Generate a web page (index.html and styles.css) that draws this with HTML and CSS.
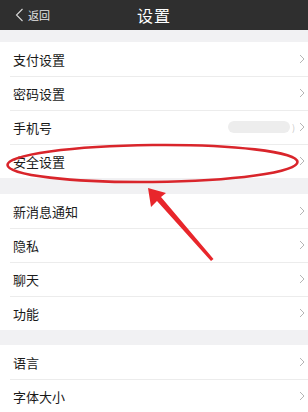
FILE: index.html
```html
<!DOCTYPE html>
<html lang="zh">
<head>
<meta charset="utf-8">
<link rel="stylesheet" href="styles.css">
</head>
<body>
<div class="page">
  <header class="topbar">
    <div class="back">
      <svg class="back-icon" width="9" height="14" viewBox="0 0 9 14"><path d="M7.5 1 L1.5 7 L7.5 13" fill="none" stroke="#d8d8d8" stroke-width="1.1"/></svg>
      <span>返回</span>
    </div>
    <div class="title">设置</div>
  </header>
  <div class="gap gap1"></div>
  <section class="group">
    <div class="row"><span class="label">支付设置</span><svg class="chev" width="6" height="10" viewBox="0 0 6 10"><path d="M1 1 L5 5 L1 9" fill="none" stroke="#b5b5b5" stroke-width="1"/></svg></div>
    <div class="row"><span class="label">密码设置</span><svg class="chev" width="6" height="10" viewBox="0 0 6 10"><path d="M1 1 L5 5 L1 9" fill="none" stroke="#b5b5b5" stroke-width="1"/></svg></div>
    <div class="row"><span class="label">手机号</span><span class="value"><span class="blur"></span><span class="paren">)</span></span><svg class="chev" width="6" height="10" viewBox="0 0 6 10"><path d="M1 1 L5 5 L1 9" fill="none" stroke="#b5b5b5" stroke-width="1"/></svg></div>
    <div class="row"><span class="label">安全设置</span><svg class="chev" width="6" height="10" viewBox="0 0 6 10"><path d="M1 1 L5 5 L1 9" fill="none" stroke="#b5b5b5" stroke-width="1"/></svg></div>
  </section>
  <div class="gap gap2"></div>
  <section class="group">
    <div class="row"><span class="label">新消息通知</span><svg class="chev" width="6" height="10" viewBox="0 0 6 10"><path d="M1 1 L5 5 L1 9" fill="none" stroke="#b5b5b5" stroke-width="1"/></svg></div>
    <div class="row"><span class="label">隐私</span><svg class="chev" width="6" height="10" viewBox="0 0 6 10"><path d="M1 1 L5 5 L1 9" fill="none" stroke="#b5b5b5" stroke-width="1"/></svg></div>
    <div class="row"><span class="label">聊天</span><svg class="chev" width="6" height="10" viewBox="0 0 6 10"><path d="M1 1 L5 5 L1 9" fill="none" stroke="#b5b5b5" stroke-width="1"/></svg></div>
    <div class="row"><span class="label">功能</span><svg class="chev" width="6" height="10" viewBox="0 0 6 10"><path d="M1 1 L5 5 L1 9" fill="none" stroke="#b5b5b5" stroke-width="1"/></svg></div>
  </section>
  <div class="gap gap3"></div>
  <section class="group">
    <div class="row"><span class="label">语言</span><svg class="chev" width="6" height="10" viewBox="0 0 6 10"><path d="M1 1 L5 5 L1 9" fill="none" stroke="#b5b5b5" stroke-width="1"/></svg></div>
    <div class="row"><span class="label">字体大小</span><svg class="chev" width="6" height="10" viewBox="0 0 6 10"><path d="M1 1 L5 5 L1 9" fill="none" stroke="#b5b5b5" stroke-width="1"/></svg></div>
  </section>
  <svg class="annot" width="308" height="412" viewBox="0 0 308 412">
    <ellipse cx="152.5" cy="163.5" rx="145" ry="18.5" fill="none" stroke="#d9252b" stroke-width="2.6" transform="rotate(-0.6 152 164)"/>
    <polygon points="148,188 151,207 157,201 211,261 213.5,259 161,197 166,193" fill="#e8262b"/>
  </svg>
</div>
</body>
</html>
```
FILE: styles.css
```css
* { box-sizing: border-box; }
html, body { margin: 0; padding: 0; }
body {
  font-family: "Noto Sans CJK SC", "Noto Sans", sans-serif;
  background: #f1f1f3;
  color: #1a1a1a;
}
.page {
  position: relative;
  width: 308px;
  height: 412px;
  overflow: hidden;
  background: #f1f1f3;
}
.topbar {
  height: 30px;
  background: #2f2f2f;
  display: flex;
  align-items: center;
  justify-content: center;
  position: relative;
}
.back {
  position: absolute;
  left: 15px;
  top: 0;
  height: 30px;
  display: flex;
  align-items: center;
  gap: 4px;
  color: #e6e6e6;
  font-size: 11px;
}
.title {
  color: #ffffff;
  font-size: 16px;
  letter-spacing: 1px;
}
.gap1 { height: 12px; }
.gap2 { height: 16px; }
.gap3 { height: 15px; }
.group { background: #ffffff; }
.row {
  height: 34px;
  display: flex;
  align-items: center;
  padding: 0 3px 0 13px;
  position: relative;
  font-size: 13px;
}
.row + .row::before {
  content: "";
  position: absolute;
  left: 10px;
  right: 0;
  top: 0;
  height: 1px;
  background: #ececec;
}
.label { flex: 1; }
.value {
  display: flex;
  align-items: center;
  margin-right: 4px;
}
.blur {
  width: 62px;
  height: 12px;
  border-radius: 6px;
  background: #ededed;
}
.paren {
  color: #c8c8c8;
  font-size: 9px;
  margin-left: 2px;
}
.chev { display: block; }
.annot {
  position: absolute;
  left: 0;
  top: 0;
  pointer-events: none;
}
```
